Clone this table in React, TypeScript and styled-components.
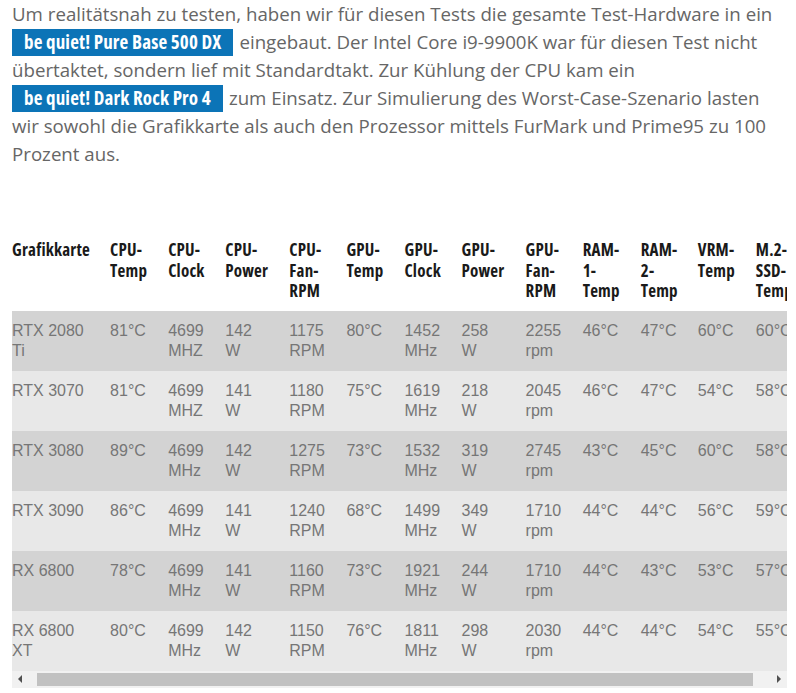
import React from "react";
import styled, { createGlobalStyle } from "styled-components";

const GlobalStyle = createGlobalStyle`
  html, body { margin: 0; padding: 0; background: #ffffff; }
  body { font-family: "Open Sans", "Liberation Sans", sans-serif; }
`;

const Page = styled.div`
  width: 775px;
  padding: 0 12px;
`;

const Paragraph = styled.p`
  margin: 0;
  font-family: "Open Sans", "Liberation Sans", sans-serif;
  font-size: 18.7px;
  line-height: 28px;
  color: #666666;
`;

const Badge = styled.span`
  display: inline-block;
  background: #0c74b7;
  color: #ffffff;
  font-family: "Open Sans", "DejaVu Sans Condensed", sans-serif;
  font-stretch: 75%;
  font-weight: 700;
  font-size: 19px;
  letter-spacing: 0.15px;
  line-height: 27px;
  padding: 0 12px;
  margin-right: 6px;
`;

const TableBox = styled.div`
  margin-top: 62px;
  width: 775px;
`;

const ScrollArea = styled.div`
  width: 775px;
  overflow-x: auto;
  scrollbar-width: none;
  &::-webkit-scrollbar {
    display: none;
  }
`;

const ScrollBar = styled.div`
  display: flex;
  align-items: center;
  height: 17px;
  background: #f1f1f1;
`;

const ArrowButton = styled.div`
  flex: 0 0 17px;
  height: 17px;
  display: flex;
  align-items: center;
  justify-content: center;
`;

const Thumb = styled.div`
  height: 13px;
  width: 716px;
  margin-left: 8px;
  background: #c1c1c1;
`;

const Spacer = styled.div`
  flex: 1;
`;

const Table = styled.table`
  table-layout: fixed;
  border-collapse: collapse;
  width: 802px;
`;

const HeadCell = styled.th`
  text-align: left;
  vertical-align: top;
  font-family: "Open Sans", "DejaVu Sans Condensed", sans-serif;
  font-stretch: 75%;
  font-weight: 700;
  font-size: 17px;
  letter-spacing: 0.2px;
  line-height: 20.5px;
  color: #1a1a1a;
  padding: 10px 20px 9px 0;
`;

const Row = styled.tr<{ $odd: boolean }>`
  background: ${(p) => (p.$odd ? "#d3d3d3" : "#e8e8e8")};
`;

const Cell = styled.td`
  vertical-align: top;
  font-family: "Liberation Sans", Arial, sans-serif;
  font-size: 16px;
  line-height: 20px;
  color: #767676;
  padding: 10px 20px 10px 0;
  height: 40px;
`;

const widths = [98, 58, 57, 64, 57, 58, 57, 64, 57, 58, 57, 58, 58];

const headers = [
  "Grafikkarte",
  "CPU-Temp",
  "CPU-Clock",
  "CPU-Power",
  "CPU-Fan-RPM",
  "GPU-Temp",
  "GPU-Clock",
  "GPU-Power",
  "GPU-Fan-RPM",
  "RAM-1-Temp",
  "RAM-2-Temp",
  "VRM-Temp",
  "M.2-SSD-Temp",
];

const rows: string[][] = [
  ["RTX 2080 Ti", "81°C", "4699 MHZ", "142 W", "1175 RPM", "80°C", "1452 MHz", "258 W", "2255 rpm", "46°C", "47°C", "60°C", "60°C"],
  ["RTX 3070", "81°C", "4699 MHZ", "141 W", "1180 RPM", "75°C", "1619 MHz", "218 W", "2045 rpm", "46°C", "47°C", "54°C", "58°C"],
  ["RTX 3080", "89°C", "4699 MHz", "142 W", "1275 RPM", "73°C", "1532 MHz", "319 W", "2745 rpm", "43°C", "45°C", "60°C", "58°C"],
  ["RTX 3090", "86°C", "4699 MHz", "141 W", "1240 RPM", "68°C", "1499 MHz", "349 W", "1710 rpm", "44°C", "44°C", "56°C", "59°C"],
  ["RX 6800", "78°C", "4699 MHz", "141 W", "1160 RPM", "73°C", "1921 MHz", "244 W", "1710 rpm", "44°C", "43°C", "53°C", "57°C"],
  ["RX 6800 XT", "80°C", "4699 MHz", "142 W", "1150 RPM", "76°C", "1811 MHz", "298 W", "2030 rpm", "44°C", "44°C", "54°C", "55°C"],
];

export default function App() {
  return (
    <>
      <GlobalStyle />
      <Page>
        <Paragraph>
          Um realitätsnah zu testen, haben wir für diesen Tests die gesamte Test-Hardware in ein{" "}
          <Badge>be quiet! Pure Base 500 DX</Badge>
          eingebaut. Der Intel Core i9-9900K war für diesen Test nicht übertaktet, sondern lief mit
          Standardtakt. Zur Kühlung der CPU kam ein <Badge>be quiet! Dark Rock Pro 4</Badge>
          zum Einsatz. Zur Simulierung des Worst-Case-Szenario lasten wir sowohl die Grafikkarte als
          auch den Prozessor mittels FurMark und Prime95 zu 100 Prozent aus.
        </Paragraph>
        <TableBox>
          <ScrollArea>
            <Table>
              <colgroup>
                {widths.map((w, i) => (
                  <col key={i} style={{ width: w }} />
                ))}
              </colgroup>
              <thead>
                <tr>
                  {headers.map((h) => (
                    <HeadCell key={h}>{h}</HeadCell>
                  ))}
                </tr>
              </thead>
              <tbody>
                {rows.map((r, i) => (
                  <Row key={r[0]} $odd={i % 2 === 0}>
                    {r.map((c, j) => (
                      <Cell key={j}>{c}</Cell>
                    ))}
                  </Row>
                ))}
              </tbody>
            </Table>
          </ScrollArea>
          <ScrollBar>
            <ArrowButton>
              <svg width="5" height="8" viewBox="0 0 5 8">
                <polygon points="0,4 4,0 4,8" fill="#505050" />
              </svg>
            </ArrowButton>
            <Thumb />
            <Spacer />
            <ArrowButton>
              <svg width="5" height="8" viewBox="0 0 5 8">
                <polygon points="5,4 1,0 1,8" fill="#505050" />
              </svg>
            </ArrowButton>
          </ScrollBar>
        </TableBox>
      </Page>
    </>
  );
}
